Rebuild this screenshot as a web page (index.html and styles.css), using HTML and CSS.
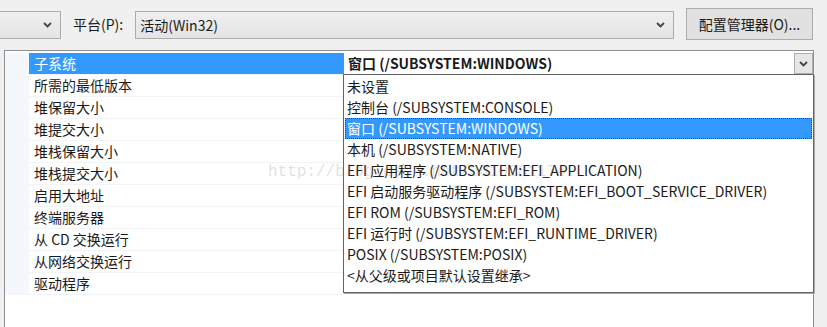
FILE: index.html
```html
<!DOCTYPE html>
<html lang="zh-CN">
<head>
  <meta charset="UTF-8" />
  <title>属性页</title>
  <link rel="stylesheet" href="styles.css">
</head>
<body>
  <div class="toolbar">
    <div class="combo combo-config">
      <svg class="chev" width="9" height="6" viewBox="0 0 9 6"><path d="M1 1 L4.5 4.5 L8 1" fill="none" stroke="#444" stroke-width="1.8"/></svg>
    </div>
    <span class="label">平台(P):</span>
    <div class="combo combo-platform">
      <span>活动(Win32)</span>
      <svg class="chev" width="9" height="6" viewBox="0 0 9 6"><path d="M1 1 L4.5 4.5 L8 1" fill="none" stroke="#444" stroke-width="1.8"/></svg>
    </div>
    <button class="btn">配置管理器(O)...</button>
  </div>

  <div class="panel">
    <div class="rows">
      <div class="row selected">
        <div class="gutter"></div>
        <div class="name">子系统</div>
        <div class="value">
          <span>窗口 (/SUBSYSTEM:WINDOWS)</span>
          <span class="drop-btn">
            <svg width="9" height="6" viewBox="0 0 9 6"><path d="M1 1 L4.5 4.5 L8 1" fill="none" stroke="#444" stroke-width="1.8"/></svg>
          </span>
        </div>
      </div>
      <div class="row"><div class="gutter"></div><div class="name">所需的最低版本</div><div class="value"></div></div>
      <div class="row"><div class="gutter"></div><div class="name">堆保留大小</div><div class="value"></div></div>
      <div class="row"><div class="gutter"></div><div class="name">堆提交大小</div><div class="value"></div></div>
      <div class="row"><div class="gutter"></div><div class="name">堆栈保留大小</div><div class="value"></div></div>
      <div class="row"><div class="gutter"></div><div class="name">堆栈提交大小</div><div class="value"></div></div>
      <div class="row"><div class="gutter"></div><div class="name">启用大地址</div><div class="value"></div></div>
      <div class="row"><div class="gutter"></div><div class="name">终端服务器</div><div class="value"></div></div>
      <div class="row"><div class="gutter"></div><div class="name">从 CD 交换运行</div><div class="value"></div></div>
      <div class="row"><div class="gutter"></div><div class="name">从网络交换运行</div><div class="value"></div></div>
      <div class="row"><div class="gutter"></div><div class="name">驱动程序</div><div class="value"></div></div>
    </div>

    <ul class="dropdown">
      <li>未设置</li>
      <li>控制台 (/SUBSYSTEM:CONSOLE)</li>
      <li class="active">窗口 (/SUBSYSTEM:WINDOWS)</li>
      <li>本机 (/SUBSYSTEM:NATIVE)</li>
      <li>EFI 应用程序 (/SUBSYSTEM:EFI_APPLICATION)</li>
      <li>EFI 启动服务驱动程序 (/SUBSYSTEM:EFI_BOOT_SERVICE_DRIVER)</li>
      <li>EFI ROM (/SUBSYSTEM:EFI_ROM)</li>
      <li>EFI 运行时 (/SUBSYSTEM:EFI_RUNTIME_DRIVER)</li>
      <li>POSIX (/SUBSYSTEM:POSIX)</li>
      <li>&lt;从父级或项目默认设置继承&gt;</li>
    </ul>

    <div class="watermark">http://blog.csdn.net/u010281174</div>
  </div>
</body>
</html>
```

FILE: styles.css
```css
* {
  box-sizing: border-box;
}

body {
  margin: 0;
  height: 327px;
  overflow: hidden;
  background: #f0f0f0;
  font-family: "Noto Sans CJK SC", "Noto Sans", sans-serif;
  font-size: 14px;
  color: #1a1a1a;
}

/* top bar */
.toolbar {
  height: 50px;
  display: flex;
  align-items: center;
  gap: 12px;
  padding-bottom: 1px;
}

.combo {
  height: 28px;
  border: 1px solid #acacac;
  background: linear-gradient(#efefef, #e4e4e4);
  display: flex;
  align-items: center;
  justify-content: space-between;
  padding: 0 8px 0 4px;
}

.combo-config {
  width: 62px;
  margin-left: -1px;
  justify-content: flex-end;
}

.combo-platform {
  flex: 1;
}

.label {
  padding-bottom: 1px;
}

.btn {
  width: 127px;
  height: 32px;
  margin-right: 14px;
  margin-top: -2px;
  border: 1px solid #adadad;
  background: #e1e1e1;
  font-family: inherit;
  font-size: 14px;
  color: #1a1a1a;
  padding: 0;
}

/* property grid */
.panel {
  position: relative;
  margin: 0 13px 0 4px;
  height: 290px;
  border: 1px solid #8f8f8f;
  border-bottom: none;
  background: #fff;
  padding-top: 2px;
}

.row {
  display: grid;
  grid-template-columns: 24px 315px 1fr;
  height: 22px;
}

.gutter {
  background: #f4f7fb;
}

.name {
  padding-left: 5px;
  line-height: 21px;
  border-bottom: 1px solid #f2f4f7;
  white-space: nowrap;
}

.row.selected .name {
  background: #3399ff;
  color: #fff;
}

.value {
  display: flex;
  justify-content: space-between;
  padding-left: 4px;
  line-height: 21px;
  font-weight: bold;
}

.drop-btn {
  width: 19px;
  height: 21px;
  border: 1px solid #acacac;
  background: #e6e6e6;
  display: flex;
  align-items: center;
  justify-content: center;
}

/* open list */
.dropdown {
  position: absolute;
  left: 338px;
  top: 23px;
  width: 471px;
  height: 219px;
  margin: 0;
  padding: 1px 1px 0;
  list-style: none;
  background: #fff;
  border: 1px solid #646464;
  box-shadow: 1px 1px 0 #a8a8a8;
}

.dropdown li {
  height: 21px;
  line-height: 21px;
  padding-left: 2px;
  white-space: nowrap;
}

.dropdown li.active {
  background: #3399ff;
  color: #fff;
  outline: 1px dotted #1c4d80;
  outline-offset: -1px;
}

.watermark {
  position: absolute;
  left: 263px;
  top: 112px;
  font-family: "Liberation Mono", monospace;
  font-size: 16px;
  color: rgba(110, 110, 110, 0.22);
  white-space: nowrap;
  pointer-events: none;
}
```
